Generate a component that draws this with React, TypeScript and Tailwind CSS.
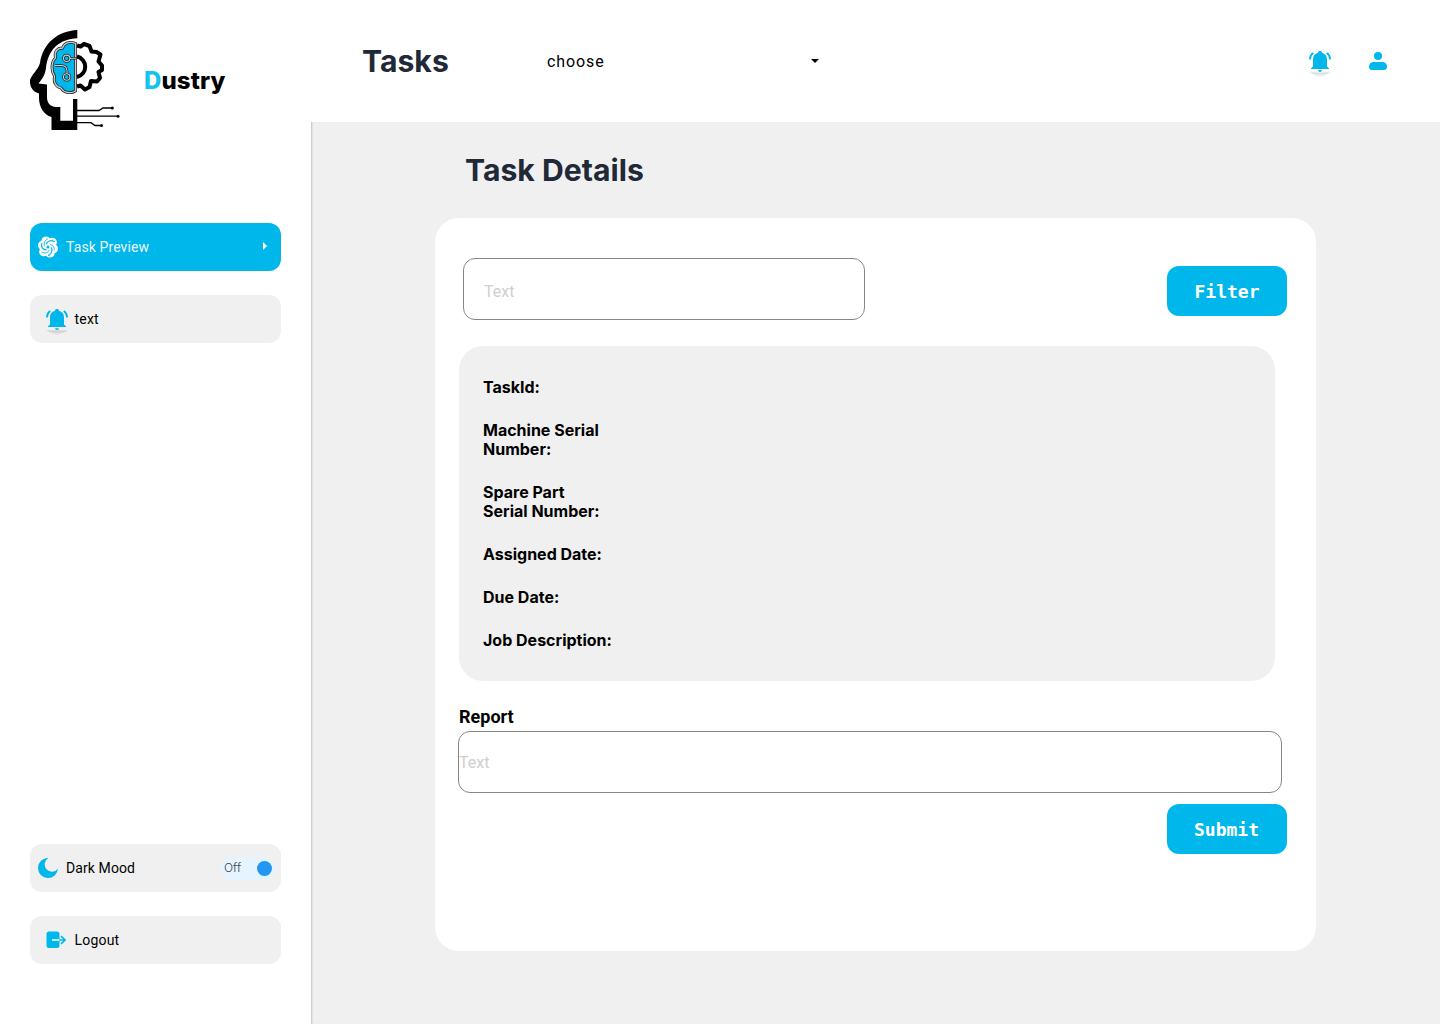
import React from "react";

function Logo() {
  return (
    <svg width="90" height="100" viewBox="0 0 90 100" className="shrink-0">
      <path
        d="M47.3 0C28 1 13 13 10 33C8 40 2 44 0 50C-.5 57 3 62 9 63.500V68C9 77 14 85 21.500 87V100H47.300V69H43V90.700H30.300V77H26C20 76.500 17 73 17 67V54.500L8.500 53.500C13 48 15 45 16 38C18 20 29 9 47.300 8.300Z"
        fill="#000"
      />
      <path
        d="M45.500 13.500C40 11 34 13 32.500 18C27 18 24 22 25.500 28C21 32 21 41 24.500 46C23 52 26 57 31 58C34 63 41 64 45.500 61Z"
        fill="#00b7ec"
        stroke="#222"
        strokeWidth="2.800"
      />
      <path
        d="M45.500 13.500C40 11 34 13 32.500 18C27 18 24 22 25.500 28C21 32 21 41 24.500 46C23 52 26 57 31 58C34 63 41 64 45.500 61Z"
        fill="none"
        stroke="#ccc"
        strokeWidth="1.300"
      />
      <g fill="none" stroke="#222" strokeWidth="2.600">
        <circle cx="36.700" cy="28.300" r="3.200" />
        <path d="M40 28.300H46M25 35.500H32Q37 36 37 41V43.500" />
        <circle cx="36.700" cy="47" r="3.200" />
      </g>
      <g fill="none" stroke="#ccc" strokeWidth="1.100">
        <circle cx="36.700" cy="28.300" r="3.200" />
        <path d="M40 28.300H46M25 35.500H32Q37 36 37 41V43.500" />
        <circle cx="36.700" cy="47" r="3.200" />
      </g>
      <g fill="none" stroke="#000" strokeWidth="4" strokeLinejoin="round">
        <path d="M47 15.500L50.500 16.500L54 14L59.500 16L61.500 21.500L66.500 22L70.500 24.500L68.500 31.500L72 35.500V40L68.500 42L70 48L67 51.500L61 51L59.500 57L55 59.500L50.500 55.500L47 56.500" />
        <path d="M47 26.500A10.500 10.500 0 0 1 47 47" />
      </g>
      <g fill="none" stroke="#000" strokeWidth="1.300">
        <path d="M47 80.500H69L73 78H82M47 86.200H88M47 92.700H61L65 95.500H71" />
      </g>
      <circle cx="82.300" cy="78" r="1.500" />
      <circle cx="88" cy="86.200" r="1.500" />
      <circle cx="71.500" cy="95.500" r="1.500" />
    </svg>
  );
}

function Pinwheel() {
  return (
    <svg width="20" height="22" viewBox="-10 -11 20 22" className="shrink-0">
      <g fill="#fff">
        <circle r="8" />
        <circle cx="-2" cy="-5.900" r="4.600" />
        <circle cx="4.300" cy="-4.700" r="4.600" />
        <circle cx="5.500" cy="1.800" r="4.500" />
        <circle cx="2" cy="5.900" r="4.600" />
        <circle cx="-4.300" cy="4.700" r="4.600" />
        <circle cx="-5.500" cy="-1.800" r="4.500" />
      </g>
      <g fill="none" stroke="#00b7ec" strokeWidth="1.200" strokeLinecap="round">
        <path d="M-1.500 -3.200C-1 -6 3 -7.200 6.300 -5.500" />
        <path d="M3.300 .8C5 3.500 3.300 7 .5 8.500" />
        <path d="M-1.800 2.900C-5 3 -7.300 -.5 -6.200 -3.500" />
      </g>
      <g fill="none" stroke="#00b7ec" strokeWidth=".9" strokeLinecap="round">
        <path d="M2.500 -2.400C5 -2.500 6.800 .5 6.200 3" />
        <path d="M1 3.500C0 6 -3 6.700 -6 5.300" />
        <path d="M-3.500 -1C-4.700 -3.500 -3.300 -7 -.5 -8" />
      </g>
      <circle r="1.500" fill="#00b7ec" />
    </svg>
  );
}

function Bell() {
  return (
    <svg width="24" height="28" viewBox="0 0 24 28" className="shrink-0 overflow-visible">
      <defs>
        <linearGradient id="bellShade" x1="0" y1="0" x2="0" y2="1">
          <stop offset="0" stopColor="#000" stopOpacity=".16" />
          <stop offset="1" stopColor="#000" stopOpacity="0" />
        </linearGradient>
      </defs>
      <path d="M1 22.500H23L17 25L12 27.500L7 25Z" fill="url(#bellShade)" className="blur-[0.500px]" />
      <path
        d="M12 1C10.800 1 10 1.700 10 2.700C6.800 3.500 5 6 5 9.300V16.500L3 18.300V19H21V18.300L19 16.500V9.300C19 6 17.200 3.500 14 2.700C14 1.700 13.200 1 12 1ZM10 20.300A2 1.700 0 0 0 14 20.300Z"
        fill="#00b7ec"
      />
      <path d="M5.200 3C3 4.500 2 6.700 1.900 9.500M18.800 3C21 4.500 22 6.700 22.100 9.500" fill="none" stroke="#00b7ec" strokeWidth="1.800" />
    </svg>
  );
}

function Person() {
  return (
    <svg width="18" height="18" viewBox="0 0 18 18" fill="#00b7ec">
      <circle cx="9" cy="4" r="4" />
      <path d="M5 10H13C16 10 18 12 18 14.500C18 17 17 18 15 18H3C1 18 0 17 0 14.500C0 12 2 10 5 10Z" />
    </svg>
  );
}

function Moon() {
  return (
    <svg width="20" height="20" viewBox="0 0 20 20" fill="#00b7ec">
      <path d="M10.500 0A10 10 0 1 0 20 10.500A7.300 7.300 0 1 1 10.500 0Z" />
    </svg>
  );
}

function LogoutIcon() {
  return (
    <svg width="20" height="18" viewBox="0 0 20 18">
      <rect x="0.500" y="0.500" width="13" height="16.500" rx="2.500" fill="#00b7ec" />
      <path d="M6 9H13.500" stroke="#fff" strokeWidth="1.500" />
      <path d="M13.500 9H19M15 5.200L19 9L15 12.800" fill="none" stroke="#00b7ec" strokeWidth="1.600" />
    </svg>
  );
}

const details = [
  ["TaskId:"],
  ["Machine Serial", "Number:"],
  ["Spare Part", "Serial Number:"],
  ["Assigned Date:"],
  ["Due Date:"],
  ["Job Description:"],
];

const rowClass = "flex h-12 w-[251px] items-center rounded-xl font-[Roboto,sans-serif] text-sm tracking-[0.2px]";
const buttonClass =
  "h-[50px] w-[120px] rounded-xl bg-[#00b7ec] font-['DejaVu_Sans_Mono',monospace] text-[18px] font-bold text-white";

export default function App() {
  return (
    <div className="flex h-[1024px] w-[1440px] overflow-hidden bg-white text-black">
      <aside className="flex w-[311px] shrink-0 flex-col px-[30px] pt-[30px] pb-[60px]">
        <div className="flex h-[100px] items-center">
          <Logo />
          <span className="mt-[2px] ml-6 font-[Inter,sans-serif] text-2xl font-extrabold tracking-[0.1px]">
            <span className="text-[#14c4f0]">D</span>ustry
          </span>
        </div>
        <nav className="mt-[93px] flex flex-col gap-6">
          <div className={`${rowClass} bg-[#00b7ec] pr-[14px] pl-2 text-white/95`}>
            <Pinwheel />
            <span className="ml-2 flex-1 tracking-[0.1px]">Task Preview</span>
            <svg width="4" height="8" viewBox="0 0 4 8" fill="#fff" className="-mt-[3px]">
              <path d="M0 0L4 4L0 8Z" />
            </svg>
          </div>
          <div className={`${rowClass} bg-[#f0f0f0] pl-[14.500px]`}>
            <div className="mt-[5px]">
              <Bell />
            </div>
            <span className="ml-1.5">text</span>
          </div>
        </nav>
        <div className="mt-auto flex flex-col gap-6">
          <div className={`${rowClass} bg-[#f0f0f0] pr-[6.500px] pl-2`}>
            <Moon />
            <span className="ml-2 flex-1 tracking-[0.1px]">Dark Mood</span>
            <span className="flex h-[23px] w-[54px] items-center justify-between rounded-full bg-[#e6f4ff] pr-[3px] pl-[3.500px] font-[Inter,sans-serif] text-xs font-light tracking-normal text-[#37424f]">
              Off
              <i className="size-[15px] rounded-full bg-[#2196f3]" />
            </span>
          </div>
          <div className={`${rowClass} bg-[#f0f0f0] pl-4`}>
            <LogoutIcon />
            <span className="ml-[8.500px]">Logout</span>
          </div>
        </div>
      </aside>

      <div className="flex flex-1 flex-col">
        <header className="flex h-[122px] shrink-0 items-center pr-[53px] pl-[51px]">
          <h1 className="mt-px w-[185px] font-[Inter,sans-serif] text-[30.200px] font-bold text-[#1f2937]">Tasks</h1>
          <div className="flex w-[272px] items-center justify-between">
            <span className="mt-[2px] font-[Roboto,sans-serif] text-base tracking-[0.900px]">choose</span>
            <svg width="8" height="4" viewBox="0 0 8 4">
              <path d="M0 0H8L4 4Z" />
            </svg>
          </div>
          <div className="ml-auto flex items-center gap-[37px]">
            <div className="mt-1.5">
              <Bell />
            </div>
            <Person />
          </div>
        </header>
        <main className="flex-1 bg-[#f0f0f0] pl-[124px] shadow-[inset_2px_0_2px_-1px_rgba(0,0,0,0.2)]">
          <h2 className="pt-7 pl-[30px] font-[Inter,sans-serif] text-[30.200px] leading-10 font-bold text-[#1f2937]">
            Task Details
          </h2>
          <section className="mt-7 flex h-[733px] w-[881px] flex-col rounded-3xl bg-white pt-10 pl-6">
            <div className="flex h-[62px] w-[828px] items-center justify-between pl-1">
              <input
                placeholder="Text"
                className="h-[62px] w-[402px] rounded-xl border border-[#868686] px-5 pt-1 font-[Roboto,sans-serif] text-base placeholder:text-[#cfcfcf]"
              />
              <button className={`${buttonClass} mt-[3px] pt-px`}>Filter</button>
            </div>
            <div className="mt-[26px] flex h-[335px] w-[816px] flex-col gap-6 rounded-3xl bg-[#f0f0f0] pt-8 pl-6 font-[Inter,sans-serif] text-base leading-[19px] font-bold">
              {details.map((lines) => (
                <div key={lines[0]}>
                  {lines.map((line) => (
                    <p key={line}>{line}</p>
                  ))}
                </div>
              ))}
            </div>
            <label className="mt-[26px] font-[Roboto,sans-serif] text-lg leading-5 font-bold">Report</label>
            <input
              placeholder="Text"
              className="mt-1 -ml-px h-[62px] w-[824px] shrink-0 rounded-xl border border-[#868686] font-[Roboto,sans-serif] text-base placeholder:text-[#cfcfcf]"
            />
            <button className={`${buttonClass} mt-[11px] ml-[707.500px]`}>Submit</button>
          </section>
        </main>
      </div>
    </div>
  );
}
